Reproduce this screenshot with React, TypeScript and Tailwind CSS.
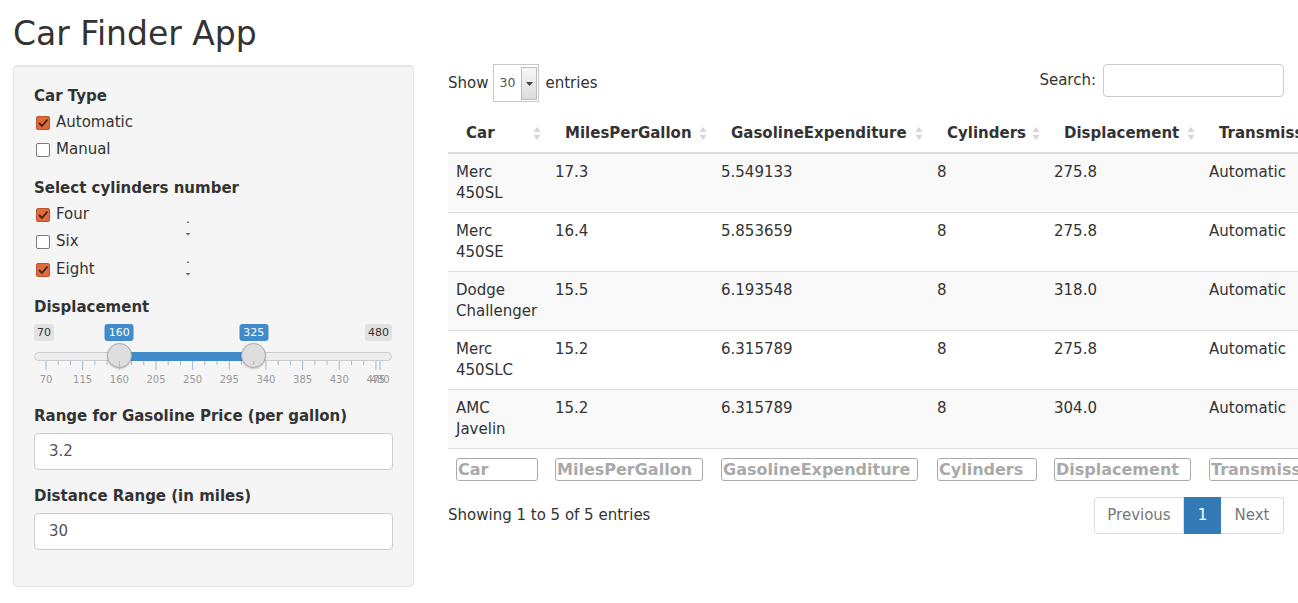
import React from "react";

const cars = [
  ["Merc 450SL", "17.3", "5.549133", "8", "275.8", "Automatic"],
  ["Merc 450SE", "16.4", "5.853659", "8", "275.8", "Automatic"],
  ["Dodge Challenger", "15.5", "6.193548", "8", "318.0", "Automatic"],
  ["Merc 450SLC", "15.2", "6.315789", "8", "275.8", "Automatic"],
  ["AMC Javelin", "15.2", "6.315789", "8", "304.0", "Automatic"],
];

const columns = [
  { name: "Car", th: "w-[99px]", input: "w-[82px]" },
  { name: "MilesPerGallon", th: "w-[166px]", input: "w-[148px]" },
  { name: "GasolineExpenditure", th: "w-[216px]", input: "w-[197px]" },
  { name: "Cylinders", th: "w-[117px]", input: "w-[100px]" },
  { name: "Displacement", th: "w-[155px]", input: "w-[137px]" },
  { name: "Transmission", th: "w-[170px]", input: "w-[150px]" },
];

// slider geometry: value -> x inside the slider box
const toX = (v: number) => 12 + ((v - 70) / 410) * 334;
const majors = [70, 115, 160, 205, 250, 295, 340, 385, 430, 475, 480];
const minors = [85, 100, 130, 145, 175, 190, 220, 235, 265, 280, 310, 325, 355, 370, 400, 415, 445, 460];

function SortIcon() {
  return (
    <svg width="8" height="15" viewBox="0 0 8 15" className="absolute right-[6px] top-[14px]">
      <path d="M4 1 L7.5 6 L0.5 6 Z" fill="#d6d6d6" />
      <path d="M4 14 L7.5 9 L0.5 9 Z" fill="#d6d6d6" />
    </svg>
  );
}

function Check({ checked, label }: { checked: boolean; label: string }) {
  return (
    <div className="flex items-center h-[21px]">
      <span className="w-[42px] flex justify-end pr-[6px]">
        {checked ? (
          <span className="w-[14px] h-[14px] rounded-[2px] bg-[#e2693c] border border-[#b9542c] flex items-center justify-center">
            <svg width="12" height="12" viewBox="0 0 12 12">
              <path d="M2 6 L5 9 L10.5 2.5" stroke="#3b2418" strokeWidth="1.8" fill="none" />
            </svg>
          </span>
        ) : (
          <span className="w-[14px] h-[14px] rounded-[2px] bg-white border border-[#7a7a7a]" />
        )}
      </span>
      <span>{label}</span>
    </div>
  );
}

function Spinner() {
  return (
    <svg width="8" height="16" viewBox="0 0 8 16">
      <path d="M4 1 L5.5 3 L2.5 3 Z" fill="#777" />
      <path d="M1.5 13 L6.5 13 L4 15.5 Z" fill="#666" />
    </svg>
  );
}

function RangeSlider() {
  const lo = toX(160);
  const hi = toX(325);
  return (
    <div className="relative h-[88px]">
      {/* min / max labels */}
      <span className="absolute left-0 top-[6px] h-[17px] px-[3px] rounded-[3px] bg-[#e1e1e1] text-[11px] leading-[17px] text-[#333]">70</span>
      <span className="absolute left-[331px] top-[6px] h-[17px] px-[3px] rounded-[3px] bg-[#e1e1e1] text-[11px] leading-[17px] text-[#333]">480</span>
      {/* current values */}
      <span
        className="absolute top-[6px] h-[17px] px-[4px] rounded-[3px] bg-[#428bca] text-[11px] leading-[17px] text-white -translate-x-1/2"
        style={{ left: lo }}
      >
        160
      </span>
      <span
        className="absolute top-[6px] h-[17px] px-[4px] rounded-[3px] bg-[#428bca] text-[11px] leading-[17px] text-white -translate-x-1/2"
        style={{ left: hi }}
      >
        325
      </span>
      {/* track */}
      <div className="absolute left-0 w-[358px] top-[34px] h-[9px] rounded-full bg-[#ededed] border border-[#cccccc]" />
      <div className="absolute top-[34px] h-[9px] bg-[#428bca]" style={{ left: lo, width: hi - lo }} />
      {/* handles */}
      <div
        className="absolute top-[25px] w-[25px] h-[25px] rounded-full bg-[#dedede] border border-[#ababab] shadow-[0_1px_2px_rgba(0,0,0,0.2)]"
        style={{ left: lo - 12.5 }}
      />
      <div
        className="absolute top-[25px] w-[25px] h-[25px] rounded-full bg-[#dedede] border border-[#ababab] shadow-[0_1px_2px_rgba(0,0,0,0.2)]"
        style={{ left: hi - 12.5 }}
      />
      {/* grid */}
      <svg width="360" height="12" className="absolute left-0 top-[43px]">
        {majors.map((v) => (
          <line key={v} x1={toX(v)} x2={toX(v)} y1="0" y2="9" stroke="#9dbcd8" strokeWidth="1" />
        ))}
        {minors.map((v) => (
          <line key={v} x1={toX(v)} x2={toX(v)} y1="0" y2="4" stroke="#9dbcd8" strokeWidth="1" />
        ))}
      </svg>
      {majors.map((v) => (
        <span
          key={v}
          className="absolute top-[56px] text-[10px] leading-[12px] text-[#999] -translate-x-1/2"
          style={{ left: toX(v) }}
        >
          {v}
        </span>
      ))}
    </div>
  );
}

export default function App() {
  return (
    <div className="min-h-screen w-full overflow-hidden bg-white text-[#333] font-['DejaVu_Sans',sans-serif] text-[15px] leading-[21px]">
      <h1 className="pl-[13px] pt-[14px] mb-[11px] text-[33px] leading-[40px] font-normal">Car Finder App</h1>

      <div className="flex items-start">
        {/* sidebar */}
        <div className="ml-[13px] w-[401px] h-[522px] shrink-0 rounded-[4px] border border-[#e3e3e3] bg-[#f5f5f5] shadow-[inset_0_1px_1px_rgba(0,0,0,0.05)] px-[20px] pt-[20px] relative">
          <div className="font-bold">Car Type</div>
          <div className="mt-[5px] -ml-[20px]">
            <Check checked label="Automatic" />
            <div className="mt-[6px]">
              <Check checked={false} label="Manual" />
            </div>
          </div>

          <div className="font-bold mt-[18px]">Select cylinders number</div>
          <div className="mt-[5px] -ml-[20px]">
            <Check checked label="Four" />
            <div className="mt-[6px]">
              <Check checked={false} label="Six" />
            </div>
            <div className="mt-[7px]">
              <Check checked label="Eight" />
            </div>
          </div>
          <div className="absolute left-[170px] top-[154px]">
            <Spinner />
          </div>
          <div className="absolute left-[170px] top-[194px]">
            <Spinner />
          </div>

          <div className="font-bold mt-[17px]">Displacement</div>
          <RangeSlider />

          <div className="font-bold">Range for Gasoline Price (per gallon)</div>
          <div className="mt-[6px] w-[359px] h-[37px] rounded-[4px] border border-[#ccc] bg-white pl-[14px] flex items-center text-[#555]">
            3.2
          </div>

          <div className="font-bold mt-[16px]">Distance Range (in miles)</div>
          <div className="mt-[6px] w-[359px] h-[37px] rounded-[4px] border border-[#ccc] bg-white pl-[14px] flex items-center text-[#555]">
            30
          </div>
        </div>

        {/* main */}
        <div className="ml-[34px] w-[836px] shrink-0">
          <div className="flex justify-between items-start h-[48px] -mt-[1px]">
            <div className="flex items-center h-[38px]">
              <span>Show</span>
              <div className="ml-[5px] relative w-[46px] h-[38px] border border-[#c8c8c8] bg-white">
                <span className="absolute left-[5px] top-[9px] text-[12.5px] leading-[18px] text-[#555]">30</span>
                <div className="absolute right-[1px] top-[2px] bottom-[1px] w-[16px] border border-[#bdbdbd] bg-gradient-to-b from-[#f7f7f7] to-[#dcdcdc] flex items-center justify-center">
                  <svg width="7" height="4" viewBox="0 0 7 4">
                    <path d="M0 0 L7 0 L3.5 4 Z" fill="#444" />
                  </svg>
                </div>
              </div>
              <span className="ml-[6px]">entries</span>
            </div>
            <div className="flex items-center">
              <span>Search:</span>
              <div className="ml-[7px] w-[181px] h-[33px] rounded-[4px] border border-[#ccc] bg-white" />
            </div>
          </div>

          <table className="table-fixed border-collapse w-[923px] max-w-none">
            <thead>
              <tr>
                {columns.map((c) => (
                  <th
                    key={c.name}
                    className={`${c.th} relative text-left font-bold pl-[18px] pr-[30px] pt-[11px] pb-[9px] leading-[20px] border-b-2 border-[#dddddd] whitespace-nowrap overflow-hidden`}
                  >
                    {c.name}
                    <SortIcon />
                  </th>
                ))}
              </tr>
            </thead>
            <tbody>
              {cars.map((row, i) => (
                <tr key={i} className={i % 2 === 0 ? "bg-[#f9f9f9]" : "bg-white"}>
                  {row.map((cell, j) => (
                    <td
                      key={j}
                      className={`p-[8px] align-top leading-[21px] ${i > 0 ? "border-t border-[#dddddd]" : ""}`}
                    >
                      {j === 0
                        ? cell.split(" ").map((w, k) => (
                            <div key={k}>{w}</div>
                          ))
                        : cell}
                    </td>
                  ))}
                </tr>
              ))}
            </tbody>
            <tfoot>
              <tr>
                {columns.map((c) => (
                  <td key={c.name} className="px-[8px] pt-[9px] pb-[8px] border-t border-[#dddddd]">
                    <input
                      readOnly
                      placeholder={c.name}
                      className={`${c.input} h-[23px] rounded-[3px] border border-[#aaaaaa] bg-white px-[1px] text-[16px] font-bold placeholder:text-[#a9a9a9] placeholder:font-bold outline-none`}
                    />
                  </td>
                ))}
              </tr>
            </tfoot>
          </table>

          <div className="flex justify-between items-center mt-[8px]">
            <span>Showing 1 to 5 of 5 entries</span>
            <div className="flex h-[37px]">
              <span className="w-[90px] flex items-center justify-center border border-[#ddd] rounded-l-[4px] text-[#777] bg-white">
                Previous
              </span>
              <span className="w-[37px] flex items-center justify-center bg-[#337ab7] border border-[#337ab7] text-white">1</span>
              <span className="w-[63px] flex items-center justify-center border border-[#ddd] border-l-0 rounded-r-[4px] text-[#777] bg-white">
                Next
              </span>
            </div>
          </div>
        </div>
      </div>
    </div>
  );
}
